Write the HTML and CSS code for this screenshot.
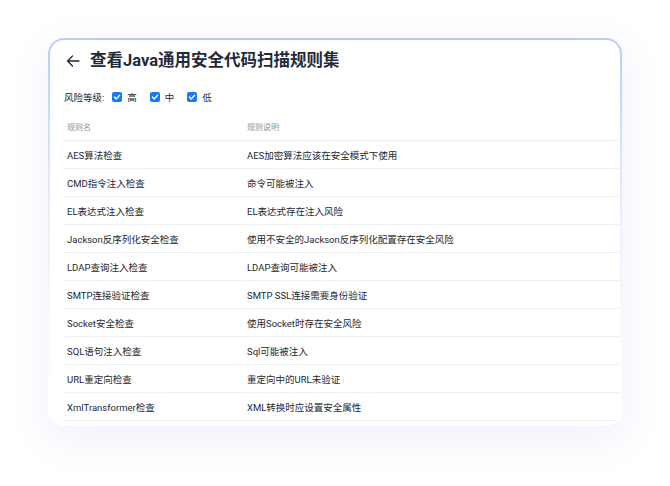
FILE: index.html
```html
<!DOCTYPE html>
<html lang="zh-CN">
<head>
<meta charset="utf-8">
<link rel="stylesheet" href="styles.css">
</head>
<body>
<div class="card">
  <div class="title-row">
    <svg class="back" width="14" height="14" viewBox="0 0 14 14"><path d="M13 7H1.5M6.5 2L1.5 7l5 5" fill="none" stroke="#1f2937" stroke-width="1.3" stroke-linecap="round" stroke-linejoin="round"/></svg>
    <h1 class="title">查看Java通用安全代码扫描规则集</h1>
  </div>
  <div class="filter">
    <span class="filter-label">风险等级:</span>
    <label class="chk"><svg width="10" height="10" viewBox="0 0 10 10"><rect width="10" height="10" rx="2" fill="#1677ff"/><path d="M2.4 5.1L4.2 6.9L7.6 3.3" fill="none" stroke="#fff" stroke-width="1.4" stroke-linecap="round" stroke-linejoin="round"/></svg><span>高</span></label>
    <label class="chk"><svg width="10" height="10" viewBox="0 0 10 10"><rect width="10" height="10" rx="2" fill="#1677ff"/><path d="M2.4 5.1L4.2 6.9L7.6 3.3" fill="none" stroke="#fff" stroke-width="1.4" stroke-linecap="round" stroke-linejoin="round"/></svg><span>中</span></label>
    <label class="chk"><svg width="10" height="10" viewBox="0 0 10 10"><rect width="10" height="10" rx="2" fill="#1677ff"/><path d="M2.4 5.1L4.2 6.9L7.6 3.3" fill="none" stroke="#fff" stroke-width="1.4" stroke-linecap="round" stroke-linejoin="round"/></svg><span>低</span></label>
  </div>
  <div class="table">
    <div class="row head"><div class="c1">规则名</div><div class="c2">规则说明</div></div>
    <div class="row"><div class="c1">AES算法检查</div><div class="c2">AES加密算法应该在安全模式下使用</div></div>
    <div class="row"><div class="c1">CMD指令注入检查</div><div class="c2">命令可能被注入</div></div>
    <div class="row"><div class="c1">EL表达式注入检查</div><div class="c2">EL表达式存在注入风险</div></div>
    <div class="row"><div class="c1">Jackson反序列化安全检查</div><div class="c2">使用不安全的Jackson反序列化配置存在安全风险</div></div>
    <div class="row"><div class="c1">LDAP查询注入检查</div><div class="c2">LDAP查询可能被注入</div></div>
    <div class="row"><div class="c1">SMTP连接验证检查</div><div class="c2">SMTP SSL连接需要身份验证</div></div>
    <div class="row"><div class="c1">Socket安全检查</div><div class="c2">使用Socket时存在安全风险</div></div>
    <div class="row"><div class="c1">SQL语句注入检查</div><div class="c2">Sql可能被注入</div></div>
    <div class="row"><div class="c1">URL重定向检查</div><div class="c2">重定向中的URL未验证</div></div>
    <div class="row"><div class="c1">XmlTransformer检查</div><div class="c2">XML转换时应设置安全属性</div></div>
  </div>
</div>
</body>
</html>
```

FILE: styles.css
```css
html, body {
  margin: 0;
  padding: 0;
  background: #ffffff;
}
body {
  font-family: Roboto, "Noto Sans CJK SC", sans-serif;
  color: #24282e;
  width: 670px;
  height: 486px;
  overflow: hidden;
}
.card {
  box-sizing: border-box;
  width: 574px;
  height: 388px;
  margin: 38px 0 0 48px;
  padding: 10px 0 0 13px;
  border: 2px solid transparent;
  border-radius: 16px;
  background:
    linear-gradient(#ffffff, #ffffff) padding-box,
    linear-gradient(180deg, #b6cdfc 0%, #c9daf9 18%, rgba(225,232,248,0.7) 45%, rgba(240,243,250,0.3) 80%, rgba(255,255,255,0) 100%) border-box;
  box-shadow: 0 12px 40px rgba(96, 112, 230, 0.1);
  overflow: hidden;
}
.title-row {
  display: flex;
  align-items: center;
  height: 22px;
  padding-left: 3px;
}
.back {
  display: block;
  margin-right: 10px;
}
.title {
  margin: 0;
  font-size: 16.5px;
  line-height: 22px;
  font-weight: 700;
  color: #1f2a3a;
}
.filter {
  display: flex;
  align-items: center;
  height: 20px;
  margin-top: 15px;
  padding-left: 1px;
  font-size: 9.5px;
  color: #24282e;
}
.filter-label {
  margin-right: 8px;
}
.chk {
  display: flex;
  align-items: center;
  gap: 5px;
  margin-right: 13px;
}
.chk svg {
  display: block;
}
.table {
  margin-top: 6px;
}
.row {
  box-sizing: border-box;
  display: flex;
  align-items: center;
  height: 28px;
  border-bottom: 1px solid #eef0f4;
  font-size: 9.5px;
  color: #24282e;
}
.row.head {
  font-size: 8px;
  color: #8c939d;
  border-bottom-color: #ebedf1;
}
.c1 {
  width: 176px;
  padding-left: 4px;
}
.c2 {
  padding-left: 4px;
}
```
